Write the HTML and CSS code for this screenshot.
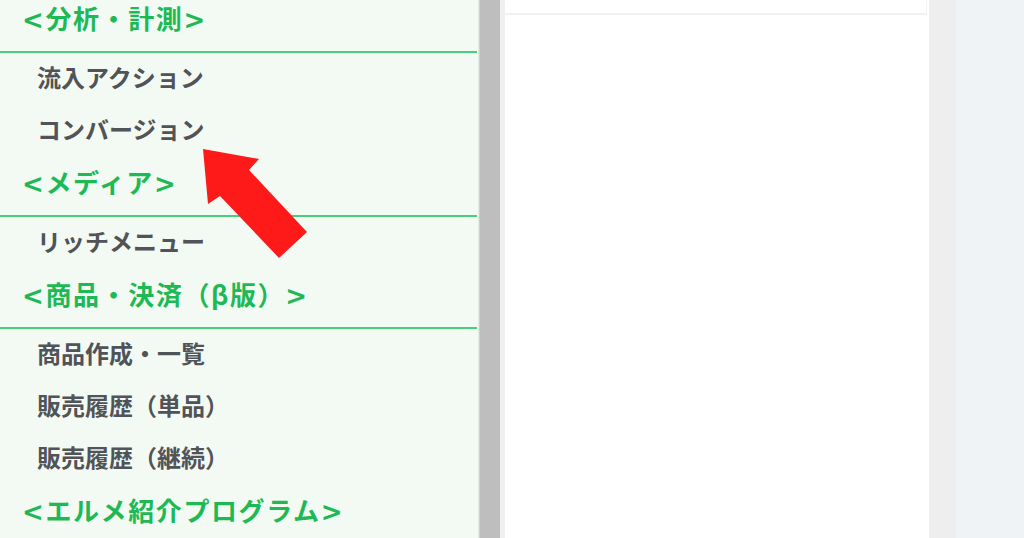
FILE: index.html
```html
<!DOCTYPE html>
<html lang="ja">
<head>
<meta charset="utf-8">
<title>メニュー</title>
<link rel="stylesheet" href="styles.css">
</head>
<body>
<div class="layout">
  <nav class="sidebar">
    <div class="menu">
      <div class="heading"><span class="br">&lt;</span>分析・計測<span class="br">&gt;</span></div>
      <div class="item">流入アクション</div>
      <div class="item">コンバージョン</div>
      <div class="heading"><span class="br">&lt;</span>メディア<span class="br">&gt;</span></div>
      <div class="item">リッチメニュー</div>
      <div class="heading"><span class="br">&lt;</span>商品・決済（β版）<span class="br">&gt;</span></div>
      <div class="item">商品作成・一覧</div>
      <div class="item">販売履歴（単品）</div>
      <div class="item">販売履歴（継続）</div>
      <div class="heading"><span class="br">&lt;</span>エルメ紹介プログラム<span class="br">&gt;</span></div>
    </div>
    <svg class="arrow" width="120" height="120" viewBox="0 0 120 120" aria-hidden="true">
      <polygon points="3,1 59,11 49,22 107,84 79,110 20,48 8,56" fill="#ff1a1a"/>
    </svg>
  </nav>
  <div class="scrollbar"></div>
  <div class="gap"></div>
  <main class="content">
    <div class="topcard"></div>
  </main>
  <div class="gutter"></div>
  <div class="rest"></div>
</div>
</body>
</html>
```

FILE: styles.css
```css
* { box-sizing: border-box; }
html, body {
  margin: 0;
  padding: 0;
  height: 100%;
  overflow: hidden;
}
body {
  font-family: "Noto Sans CJK JP", "Noto Sans", sans-serif;
  background: #eff3f5;
}
.layout {
  display: flex;
  height: 538px;
}
.sidebar {
  position: relative;
  width: 479px;
  flex: none;
  background: #f3faf3;
  border-right: 1px solid #e4ebe4;
  overflow: hidden;
}
.menu {
  margin-top: -7px;
  width: 477px;
}
.heading {
  height: 60px;
  padding: 10px 0 18px 22px;
  font-size: 26px;
  line-height: 30px;
  font-weight: 700;
  color: #1db955;
  letter-spacing: 1.6px;
  white-space: nowrap;
  border-bottom: 2px solid #45d07e;
}
.heading:last-child { border-bottom: none; }
.br {
  display: inline-block;
  line-height: 20px;
  font-family: "DejaVu Sans", sans-serif;
  font-weight: 700;
}
.item {
  height: 52px;
  padding: 11px 0 15px 37px;
  font-size: 24px;
  line-height: 26px;
  font-weight: 700;
  color: #505357;
  white-space: nowrap;
}
.arrow {
  position: absolute;
  left: 200px;
  top: 148px;
}
.scrollbar {
  width: 21px;
  flex: none;
  background: #bebebe;
  border-left: 1px solid #d0d0d0;
}
.gap {
  width: 5px;
  flex: none;
  background: #f0f0f0;
}
.content {
  width: 424px;
  flex: none;
  background: #ffffff;
}
.topcard {
  width: 422px;
  height: 15px;
  background: #ffffff;
  border-bottom: 2px solid #f1f1f1;
  border-right: 1px solid #f4f4f4;
}
.gutter {
  width: 27px;
  flex: none;
  background: #eeeeee;
}
.rest {
  flex: 1;
  background: #eff3f5;
}
```
